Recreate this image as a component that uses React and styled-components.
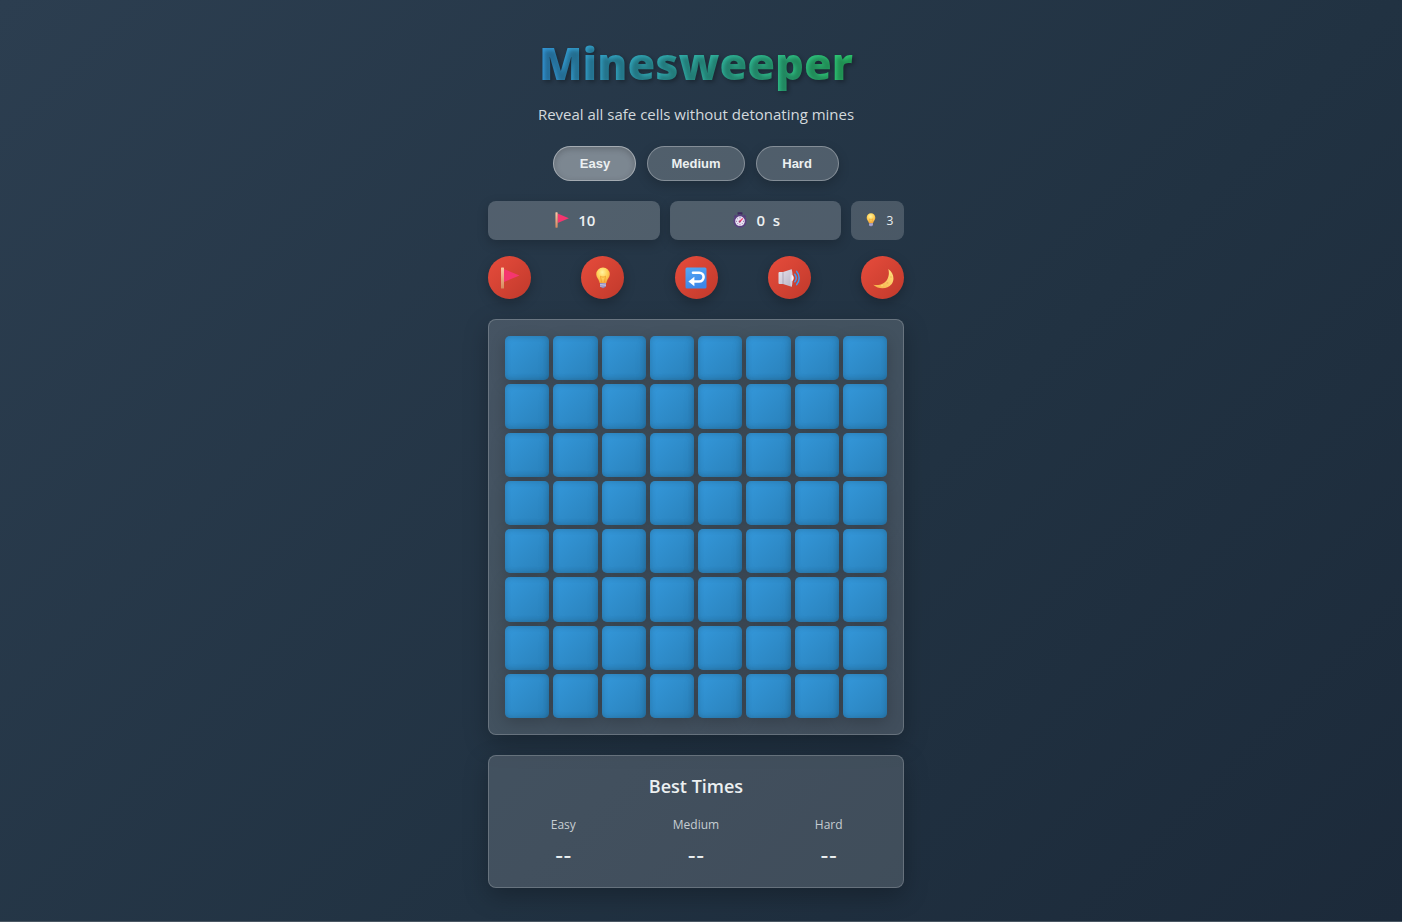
import React from 'react';
import styled, { createGlobalStyle, css } from 'styled-components';

const GlobalStyle = createGlobalStyle`
  * { box-sizing: border-box; margin: 0; padding: 0; }
  body {
    background: linear-gradient(135deg, #2c3e50 0%, #213242 60%, #1c2a3a 100%);
    background-attachment: fixed;
    color: #ecf0f1;
    font-family: "Open Sans", "Noto Sans", sans-serif;
    overflow: hidden;
  }
`;

const Page = styled.div`
  min-height: 100vh;
  display: flex;
  flex-direction: column;
  align-items: center;
  justify-content: space-between;
  padding: 32px 10px 0 0;
`;

const Main = styled.main`
  width: 100%;
  max-width: 416px;
  display: flex;
  flex-direction: column;
  align-items: stretch;
`;

const Title = styled.h1`
  align-self: center;
  font-family: "Noto Sans", "Open Sans", sans-serif;
  font-size: 45px;
  line-height: 62px;
  font-weight: 900;
  background: linear-gradient(90deg, #3498db, #2ecc71);
  -webkit-background-clip: text;
  background-clip: text;
  color: transparent;
  text-shadow: 2px 2px 4px rgba(0, 0, 0, 0.3);
`;

const Subtitle = styled.p`
  margin-top: 8px;
  font-size: 15px;
  line-height: 24px;
  text-align: center;
  color: #d3d9dd;
`;

const Levels = styled.div`
  display: flex;
  justify-content: center;
  gap: 11px;
  margin-top: 20px;
`;

const LevelButton = styled.button`
  height: 35px;
  padding: 0 23px;
  min-width: 83px;
  border: 1px solid rgba(255, 255, 255, 0.3);
  border-radius: 18px;
  background: ${(p) => (p.$active ? 'rgba(255, 255, 255, 0.4)' : 'rgba(255, 255, 255, 0.2)')};
  color: #ecf0f1;
  font: 700 13px "Liberation Sans", Arial, sans-serif;
  cursor: pointer;
  box-shadow: ${(p) => (p.$active ? 'inset 0 2px 6px rgba(0, 0, 0, 0.2)' : '0 4px 12px rgba(0, 0, 0, 0.2)')};
`;

const Stats = styled.div`
  display: grid;
  grid-template-columns: 1fr 1fr 53px;
  gap: 10px;
  margin-top: 20px;
`;

const Stat = styled.div`
  height: 39px;
  display: flex;
  align-items: center;
  justify-content: center;
  gap: ${(p) => (p.$small ? '9px' : '8px')};
  padding: 0 0 1px 2px;
  border-radius: 8px;
  background: ${(p) => (p.$small ? 'rgba(255, 255, 255, 0.18)' : 'rgba(255, 255, 255, 0.2)')};
  font-size: ${(p) => (p.$small ? '12px' : '15px')};
  font-weight: ${(p) => (p.$small ? 400 : 600)};
  white-space: pre;
  ${(p) => !p.$small && css`box-shadow: 0 4px 12px rgba(0, 0, 0, 0.2);`}
`;

const Actions = styled.div`
  display: flex;
  justify-content: space-between;
  margin-top: 16px;
`;

const ActionButton = styled.button`
  width: 43px;
  height: 43px;
  display: grid;
  place-items: center;
  border: 0;
  border-radius: 50%;
  background: linear-gradient(135deg, #e74c3c, #c0392b);
  box-shadow: 0 4px 12px rgba(0, 0, 0, 0.25);
  cursor: pointer;
`;

const panel = css`
  border: 1px solid rgba(255, 255, 255, 0.2);
  border-radius: 8px;
  background: rgba(255, 255, 255, 0.15);
  box-shadow: 0 8px 24px rgba(0, 0, 0, 0.25);
`;

const Board = styled.div`
  ${panel}
  display: grid;
  grid-template-columns: repeat(8, 1fr);
  gap: 4px;
  margin-top: 20px;
  padding: 16px;
`;

const Cell = styled.button`
  aspect-ratio: 1;
  border: 0;
  border-radius: 5px;
  background: linear-gradient(135deg, #3498db, #2980b9);
  box-shadow: 0 4px 15px rgba(0, 0, 0, 0.2), inset 0 0 6px rgba(0, 0, 0, 0.2);
  cursor: pointer;
`;

const Best = styled.section`
  ${panel}
  margin-top: 20px;
  padding: 17px 8px 18px;
`;

const BestTitle = styled.h2`
  font-size: 18px;
  line-height: 27px;
  font-weight: 600;
  text-align: center;
`;

const BestList = styled.dl`
  display: grid;
  grid-template-columns: repeat(3, 1fr);
  margin-top: 15px;
  text-align: center;
`;

const BestLabel = styled.dt`
  font-size: 12px;
  line-height: 20px;
  color: #c6cdd2;
`;

const BestValue = styled.dd`
  margin-top: 7px;
  font-family: Inter, "Open Sans", sans-serif;
  font-size: 18px;
  line-height: 27px;
  font-weight: 600;
`;

const Footer = styled.footer`
  align-self: stretch;
  margin-right: -10px;
  border-top: 1px solid #4a5763;
`;

function FlagIcon({ size }) {
  return (
    <svg width={size} height={size} viewBox="0 0 22 22" aria-hidden="true">
      <defs>
        <linearGradient id="pole" x1="0" y1="0" x2="0" y2="1">
          <stop offset="0" stopColor="#fbc7a5" />
          <stop offset="1" stopColor="#d68a5e" />
        </linearGradient>
      </defs>
      <path d="M5 2 20.500 8.500 5 15Z" fill="#f5366f" />
      <rect x="2" y="0.500" width="3" height="21" rx="0.600" fill="url(#pole)" />
    </svg>
  );
}

function BulbIcon({ size }) {
  return (
    <svg width={size} height={size} viewBox="0 0 22 22" aria-hidden="true">
      <defs>
        <radialGradient id="glass" cx="0.450" cy="0.300" r="0.700">
          <stop offset="0" stopColor="#fff3a0" />
          <stop offset="0.500" stopColor="#ffd35a" />
          <stop offset="1" stopColor="#f3a63b" />
        </radialGradient>
      </defs>
      <path d="M11 .500a6.800 6.800 0 0 0-6.800 6.800c0 3 2.400 4.500 3.100 7.400.200.900.500 1.700 1.200 1.700h5c.700 0 1-.800 1.200-1.700.700-2.900 3.100-4.400 3.100-7.400A6.800 6.800 0 0 0 11 .500Z" fill="url(#glass)" />
      <path d="M9.600 15.500 8.500 9.200c1.500 1.200 3.500 1.200 5 0l-1.100 6.300" fill="none" stroke="#f09a2c" strokeWidth="0.800" />
      <path d="M8 16h6v3.400l-1.500 1.200c-.900 1-2.100 1-3 0L8 19.400Z" fill="#8d86b8" />
      <path d="M8 17.600l6-.600M8 19.200l6-.600" stroke="#d9d5ee" strokeWidth="0.700" />
    </svg>
  );
}

function WatchIcon() {
  return (
    <svg width="16" height="16" viewBox="0 0 16 16" aria-hidden="true">
      <rect x="5.500" y="0.300" width="5" height="2.200" rx="0.500" fill="#3f2860" />
      <path d="M7 2h2v2H7ZM1.600 4.400l1.900-1.900 1.200 1.200-1.900 1.800ZM14.400 4.400l-1.900-1.900-1.200 1.200 1.900 1.800Z" fill="#55407a" />
      <circle cx="8" cy="9.200" r="5.700" fill="#e9e2f2" stroke="#594080" strokeWidth="1.700" />
      <path d="M8 5.200v1.100M8 12.300v1.100M3.900 9.300H5M11 9.300h1.100M5.200 6.500l.700.700M5.200 12l.700-.700M10.800 12l-.700-.700" stroke="#725c91" strokeWidth="0.800" />
      <path d="M7.400 10 10.800 6.400" stroke="#ef3a70" strokeWidth="1.300" />
      <circle cx="7.700" cy="9.600" r="1.100" fill="#a43b72" />
    </svg>
  );
}

function UndoIcon() {
  return (
    <svg width="22" height="22" viewBox="0 0 22 22" aria-hidden="true">
      <defs>
        <linearGradient id="tile" x1="0" y1="0" x2="0.300" y2="1">
          <stop offset="0" stopColor="#54a8f5" />
          <stop offset="1" stopColor="#3c87e8" />
        </linearGradient>
      </defs>
      <rect x="0.500" y="0.500" width="21" height="21" rx="1.500" fill="url(#tile)" />
      <path d="M8 5.700h6.200a4.400 4.400 0 0 1 0 8.800H8.500" fill="none" stroke="#fff" strokeWidth="2.600" strokeLinecap="round" />
      <path d="M9.400 9.800v9.400L3.400 14.500Z" fill="#fff" />
    </svg>
  );
}

function SpeakerIcon() {
  return (
    <svg width="22" height="22" viewBox="0 0 22 22" aria-hidden="true">
      <defs>
        <linearGradient id="cone" x1="0" y1="0" x2="1" y2="1">
          <stop offset="0" stopColor="#e8e4ee" />
          <stop offset="1" stopColor="#b9b3c4" />
        </linearGradient>
      </defs>
      <path d="M.500 6c0-.500.400-.900.900-.900H5L13.500 2.300v17.400L5 17H1.400c-.500 0-.900-.400-.900-.900Z" fill="url(#cone)" />
      <path d="M5 5.200v11.700" stroke="#9d96aa" strokeWidth="0.700" />
      <ellipse cx="13.300" cy="11" rx="1.300" ry="8.700" fill="#d5d0de" />
      <path d="M13.500 8c3 .200 3 5.800 0 6Z" fill="#f5f2fa" />
      <path d="M16.800 7.200c1.700 2.200 1.700 5.400 0 7.600M18.700 4.400c3.300 3.800 3.300 9.400 0 13.200" fill="none" stroke="#3f9df0" strokeWidth="1.500" strokeLinecap="round" />
    </svg>
  );
}

function MoonIcon() {
  return (
    <svg width="22" height="22" viewBox="0 0 22 22" aria-hidden="true">
      <defs>
        <linearGradient id="moon" x1="0" y1="1" x2="1" y2="0">
          <stop offset="0" stopColor="#f6ad45" />
          <stop offset="1" stopColor="#ffe27f" />
        </linearGradient>
      </defs>
      <path d="M16.300 2c5.400 3.600 6.700 10.700 3.200 15.300-4.200 5.300-13 5.300-18.300.500 6.700.900 11.700-1.100 14-5.300 1.700-3.200 2.200-6.700 1.100-10.500Z" fill="url(#moon)" />
      <circle cx="19" cy="10" r="0.800" fill="#efb45a" />
      <circle cx="15.500" cy="16" r="1" fill="#efb45a" />
      <circle cx="10" cy="18.600" r="0.800" fill="#ffd97a" />
    </svg>
  );
}

const LEVELS = ['Easy', 'Medium', 'Hard'];
const CELLS = Array.from({ length: 64 }, (_, i) => i);

export default function App() {
  const [level, setLevel] = React.useState('Easy');
  return (
    <>
      <GlobalStyle />
      <Page>
        <Main>
          <Title>Minesweeper</Title>
          <Subtitle>Reveal all safe cells without detonating mines</Subtitle>
          <Levels>
            {LEVELS.map((name) => (
              <LevelButton key={name} type="button" $active={name === level} onClick={() => setLevel(name)}>
                {name}
              </LevelButton>
            ))}
          </Levels>
          <Stats>
            <Stat><FlagIcon size={16} />10</Stat>
            <Stat><WatchIcon />0  s</Stat>
            <Stat $small><BulbIcon size={14} />3</Stat>
          </Stats>
          <Actions>
            <ActionButton type="button" aria-label="Flag mode"><FlagIcon size={22} /></ActionButton>
            <ActionButton type="button" aria-label="Hint"><BulbIcon size={22} /></ActionButton>
            <ActionButton type="button" aria-label="Undo"><UndoIcon /></ActionButton>
            <ActionButton type="button" aria-label="Sound"><SpeakerIcon /></ActionButton>
            <ActionButton type="button" aria-label="Dark theme"><MoonIcon /></ActionButton>
          </Actions>
          <Board>
            {CELLS.map((i) => (
              <Cell key={i} type="button" aria-label={`Cell ${i + 1}`} />
            ))}
          </Board>
          <Best>
            <BestTitle>Best Times</BestTitle>
            <BestList>
              {LEVELS.map((name) => (
                <div key={name}>
                  <BestLabel>{name}</BestLabel>
                  <BestValue>--</BestValue>
                </div>
              ))}
            </BestList>
          </Best>
        </Main>
        <Footer />
      </Page>
    </>
  );
}
